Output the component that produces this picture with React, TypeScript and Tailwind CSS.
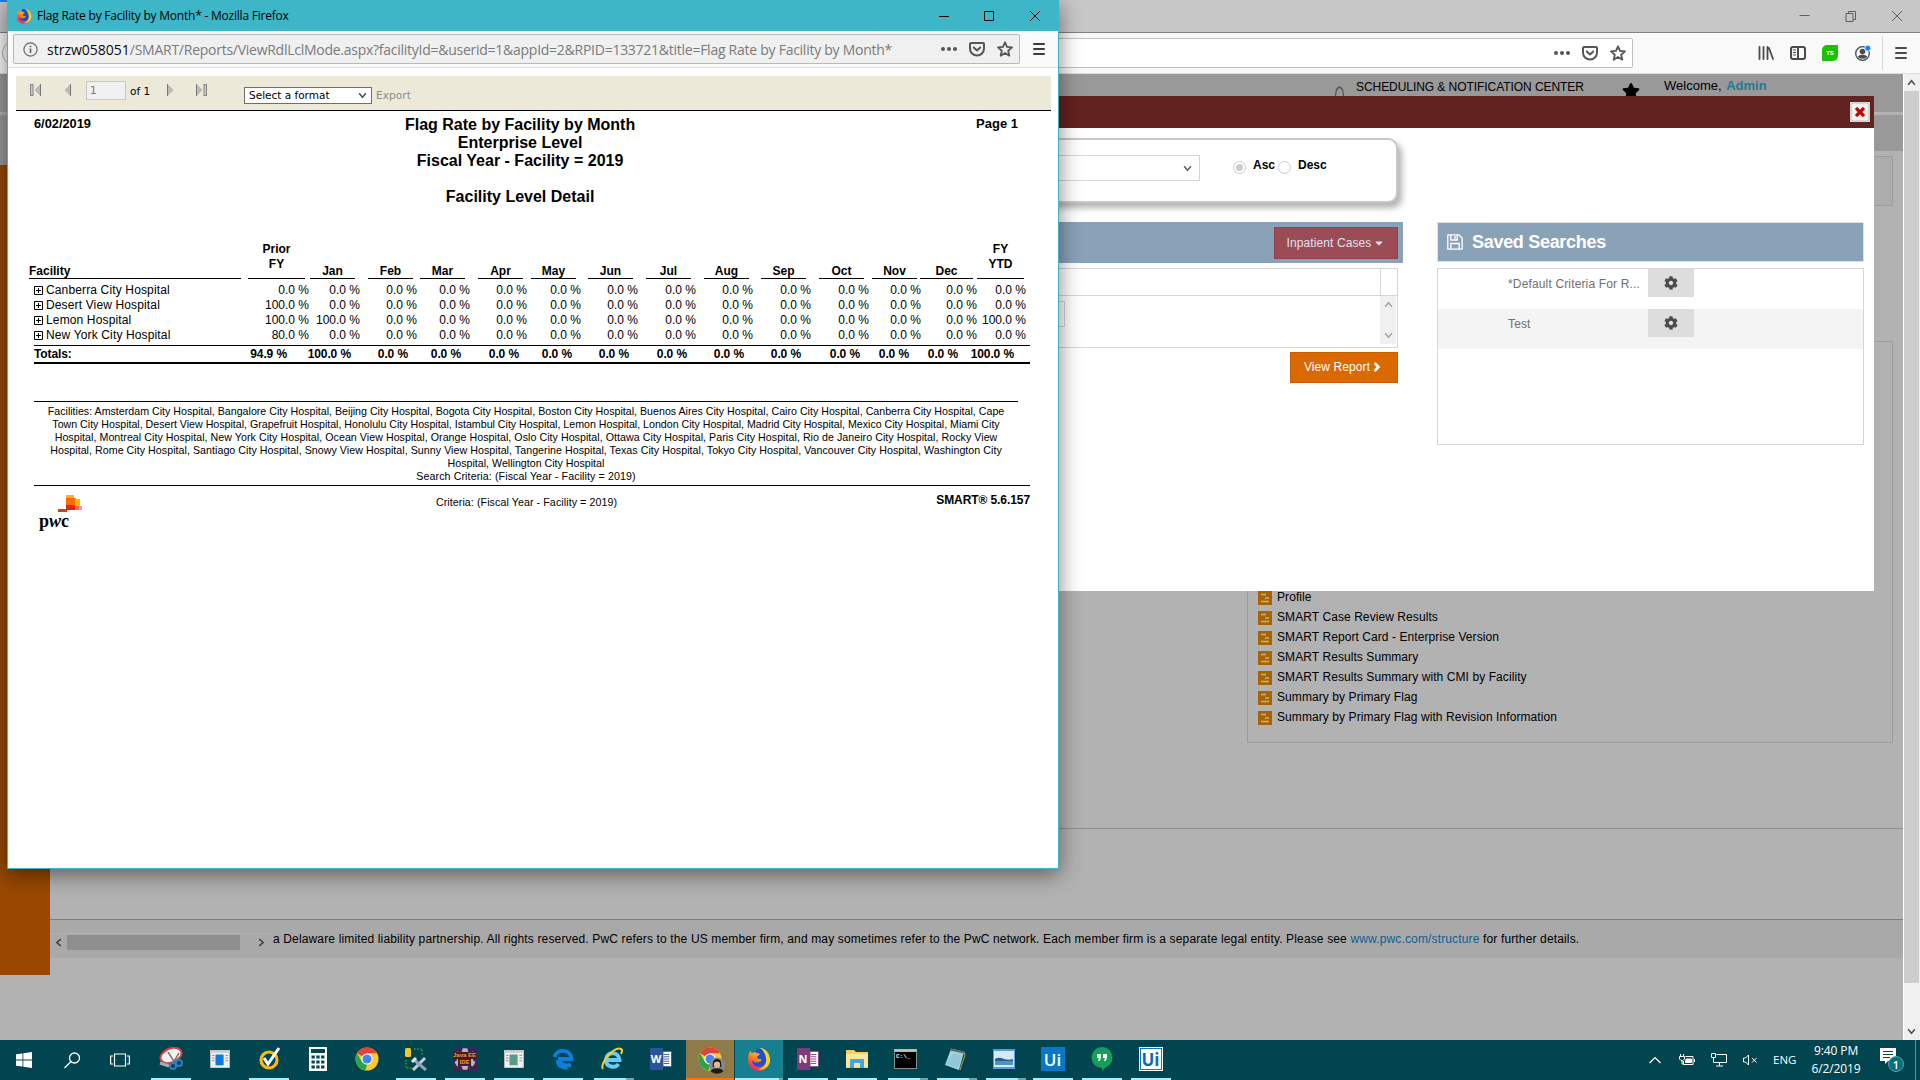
import type { ReactNode } from "react";
import { FaCog, FaCaretDown, FaStar } from "react-icons/fa";

const MONTHS = ["Jan", "Feb", "Mar", "Apr", "May", "Jun", "Jul", "Aug", "Sep", "Oct", "Nov", "Dec"];

// [gap before the column, width of the rule under the heading]
const HEADINGS: [string[], number, number][] = [
  [["Prior", "FY"], 7, 57],
  [["Jan"], 5, 45],
  [["Feb"], 13, 45],
  [["Mar"], 7, 45],
  [["Apr"], 13, 45],
  [["May"], 8, 45],
  [["Jun"], 12, 45],
  [["Jul"], 13, 45],
  [["Aug"], 13, 45],
  [["Sep"], 12, 45],
  [["Oct"], 13, 45],
  [["Nov"], 8, 45],
  [["Dec"], 3, 53],
  [["FY", "YTD"], 4, 47],
];

const ROWS: { name: string; prior: string; jan: string; ytd: string }[] = [
  { name: "Canberra City Hospital", prior: "0.0 %", jan: "0.0 %", ytd: "0.0 %" },
  { name: "Desert View Hospital", prior: "100.0 %", jan: "0.0 %", ytd: "0.0 %" },
  { name: "Lemon Hospital", prior: "100.0 %", jan: "100.0 %", ytd: "100.0 %" },
  { name: "New York City Hospital", prior: "80.0 %", jan: "0.0 %", ytd: "0.0 %" },
];

const REPORTS = [
  "Profile",
  "SMART Case Review Results",
  "SMART Report Card - Enterprise Version",
  "SMART Results Summary",
  "SMART Results Summary with CMI by Facility",
  "Summary by Primary Flag",
  "Summary by Primary Flag with Revision Information",
];

function Dots() {
  return (
    <svg width="16" height="16" viewBox="0 0 16 16" fill="#55555a">
      <circle cx="2" cy="8" r="2" />
      <circle cx="8" cy="8" r="2" />
      <circle cx="14" cy="8" r="2" />
    </svg>
  );
}

function Pocket() {
  return (
    <svg width="16" height="16" viewBox="0 0 16 16" fill="none" stroke="#55555a" strokeWidth="2" strokeLinecap="round" strokeLinejoin="round">
      <path d="M2 2h12a1 1 0 0 1 1 1v4.500a7 7 0 0 1-14 0V3a1 1 0 0 1 1-1z" />
      <path d="M4.800 6.500 8 9.500l3.200-3" />
    </svg>
  );
}

function StarOutline() {
  return (
    <svg width="16" height="16" viewBox="0 0 16 16" fill="none" stroke="#55555a" strokeWidth="1.800" strokeLinejoin="round">
      <path d="M8 1.300l2 4.600 5 .5-3.800 3.300 1.100 5L8 12.100l-4.300 2.600 1.100-5L1 6.400l5-.5z" />
    </svg>
  );
}

function Burger({ color }: { color: string }) {
  return (
    <svg width="12" height="14" viewBox="0 0 12 14" stroke={color} strokeWidth="2" strokeLinecap="round">
      <path d="M1 2h10M1 7h10M1 12h10" />
    </svg>
  );
}

function Chevron({ dir, color, size = 8 }: { dir: "up" | "down" | "left" | "right"; color: string; size?: number }) {
  const paths = { up: "M1 6l3-3.500 3 3.500", down: "M1 2l3 3.500 3-3.500", left: "M6 1L2.500 4 6 7", right: "M2 1l3.500 3L2 7" };
  return (
    <svg width={size} height={size} viewBox="0 0 8 8" fill="none" stroke={color} strokeWidth="1.400">
      <path d={paths[dir]} />
    </svg>
  );
}

function Floppy() {
  return (
    <svg width="16" height="16" viewBox="0 0 16 16" fill="none" stroke="#fff" strokeWidth="1.300" strokeLinejoin="round">
      <path d="M.8.8h11l3.400 3.400v11H.8z" />
      <path d="M3.800 15V9.500h8.400V15M3.800 1v5h6.500V1" />
      <path d="M8 2.200v2.600" strokeWidth="1.600" />
    </svg>
  );
}

function FirefoxIcon({ size }: { size: number }) {
  return (
    <svg width={size} height={size} viewBox="0 0 24 24">
      <defs>
        <linearGradient id="fx" x1="0.800" y1="0" x2="0.200" y2="1">
          <stop offset="0" stopColor="#ffe226" />
          <stop offset="0.450" stopColor="#ff9a1c" />
          <stop offset="0.750" stopColor="#ff4b33" />
          <stop offset="1" stopColor="#e31587" />
        </linearGradient>
      </defs>
      <path d="M3 4l2 2 4-1 5-4c4 1 9 5 9 12a11 11 0 0 1-22 0C1 9 2 6 3 4z" fill="url(#fx)" />
      <path d="M9 2c5-2 11 2 11 10 0 4-3 8-8 8-4 0-7-3-7-7 2 3 5 3 7 2 2 0 3-2 2-3-2 0-4 0-4-2 0-1 3-2 3-3-1-1-3-1-4-1z" fill="#1d51c9" />
      <path d="M14 1c6 3 9 8 9 13-2 8-9 9-12 9 6-2 9-6 8-12 0-4-3-7-5-10z" fill="#ffcf25" />
    </svg>
  );
}

function ChromeIcon() {
  return (
    <svg width="24" height="24" viewBox="0 0 24 24">
      <circle cx="12" cy="12" r="11.500" fill="#fcc934" />
      <path d="M12 12L2 6.300A11.500 11.500 0 0 1 22 6.300H12z" fill="#e0433a" />
      <path d="M2 6.300l5 8.600L12 17.500l-1.600 5.900A11.500 11.500 0 0 1 2 6.300z" fill="#2ba24c" />
      <circle cx="12" cy="12" r="5.600" fill="#fff" />
      <circle cx="12" cy="12" r="4.500" fill="#4285f4" />
    </svg>
  );
}

/* ---------- Browser window behind the report ---------- */

function BackToolbar() {
  return (
    <div className="flex h-[41px] items-center border-b border-[#dedede] bg-[#f9f9fa]">
      <div className="ml-[2px] h-[26px] w-[26px] shrink-0 rounded-full border border-[#b1b1b3]" />
      <div className="ml-[22px] flex h-[30px] w-[1583px] items-center justify-end gap-3 rounded-[2px] border border-[#c0c0c0] bg-white pr-[6px]">
        <Dots />
        <Pocket />
        <StarOutline />
      </div>
      <div className="ml-auto flex h-full items-center">
        <svg width="16" height="16" viewBox="0 0 16 16" stroke="#4a4a4f" strokeWidth="1.800" strokeLinecap="round">
          <path d="M1.500 2v12M5.500 2v12M9.500 2v12M11 3l4 11" />
        </svg>
        <svg className="ml-4" width="16" height="16" viewBox="0 0 16 16" fill="none" stroke="#4a4a4f" strokeWidth="2">
          <rect x="1" y="2" width="14" height="12" rx="2" />
          <path d="M8 2v12" />
          <path d="M3 5h3M3 7.500h3M3 10h3" strokeWidth="1.200" />
        </svg>
        <div className="ml-4 flex h-4 w-4 items-center justify-center rounded-tl-[5px] rounded-br-[5px] bg-[#1fc003] font-['Liberation_Sans'] text-[6px] font-bold text-white">TS</div>
        <svg className="ml-[17px]" width="16" height="17" viewBox="0 0 16 17">
          <circle cx="7.500" cy="8.500" r="6.800" fill="none" stroke="#4a4a4f" strokeWidth="1.300" />
          <circle cx="7.500" cy="6.500" r="2.800" fill="#4a4a4f" />
          <path d="M2.800 11.500c2-2.200 7.400-2.200 9.400 0-1.800 3-7.600 3-9.400 0z" fill="#4a4a4f" />
          <circle cx="12.800" cy="3.200" r="3" fill="#0a84ff" stroke="#f9f9fa" strokeWidth="0.800" />
        </svg>
        <div className="ml-[11px] h-[34px] w-px bg-[#d8d8d9]" />
        <div className="mr-[13px] ml-[12px]">
          <Burger color="#4a4a4f" />
        </div>
      </div>
    </div>
  );
}

function BackWindow() {
  return (
    <div className="flex h-[1040px] flex-col font-['Liberation_Sans',sans-serif] text-[12px] text-black">
      <div className="flex h-[33px] shrink-0 justify-between border-b border-[#828282] bg-[#c7c7c7]">
        <div className="h-[2px] w-4 bg-[#0a84ff]" />
        <svg className="mt-[10px] mr-[17px]" width="104" height="12" viewBox="0 0 104 12" fill="none" stroke="#5e5e5e">
          <path d="M0.500 5.500h10" />
          <path d="M47 3.500h7v8h-7zM49.500 3v-1.500h7v8H54" />
          <path d="M93 1l10 10M103 1L93 11" />
        </svg>
      </div>
      <BackToolbar />
      <div className="flex min-h-0 grow">
        <div className="flex w-[1903px] flex-col bg-[#b2b2b2]">
          <div className="flex h-[38px] shrink-0 bg-[#999999] pl-[1333px]">
            <svg className="mt-[11px]" width="13" height="16" viewBox="0 0 13 16" fill="none" stroke="#555" strokeWidth="1.300">
              <path d="M1.500 14c1-2 1-3 1.500-7 .5-3 2-4.500 3.500-4.500S9.500 4 10 7c.5 4 .5 5 1.500 7M6.500 1v1.500" />
            </svg>
            <span className="mt-[4px] ml-[10px] w-[256px] tracking-[-0.06px] whitespace-nowrap">SCHEDULING &amp; NOTIFICATION CENTER</span>
            <FaStar className="mt-[8px] ml-[10px]" size={18} />
            <span className="mt-[2px] ml-[24px] text-[13px] whitespace-nowrap">
              Welcome, <b className="ml-px text-[#1e7b95]">Admin</b>
            </span>
          </div>
          <div className="mt-[3px] h-[36px] shrink-0 bg-[#999999]" />
          <div className="flex h-[824px] shrink-0">
            <div className="-mt-[1px] flex w-[50px] shrink-0 flex-col">
              <div className="h-[15px] bg-[#999999]" />
              <div className="grow bg-[#994800]" />
            </div>
            <div className="flex grow flex-col">
              <div className="mt-[5px] mr-[10px] h-[50px] shrink-0 border border-[#9c9c9c] bg-[#adadad]" />
              <div className="mt-[135px] mr-[10px] ml-[1197px] flex h-[402px] shrink-0 flex-col justify-end border border-[#9c9c9c] pb-[15px] pl-[10px]">
                {REPORTS.map((name) => (
                  <div key={name} className="flex h-5 items-center">
                    <svg width="14" height="14" viewBox="0 0 14 14" className="mt-px">
                      <rect width="14" height="14" fill="#a86400" />
                      <path d="M3 3.500h5M7 7h4M3 10.500h8" stroke="#c4b393" strokeWidth="1.400" />
                    </svg>
                    <span className="ml-[5px] tracking-[0.08px] whitespace-nowrap">{name}</span>
                  </div>
                ))}
              </div>
              <div className="mt-[85px] h-px shrink-0 bg-[#8f8f8f]" />
              <div className="mt-[90px] flex h-[39px] shrink-0 border-t border-[#7b7b7b] bg-[#a9a9a9]">
                <div className="mt-[13px] flex h-[17px] w-[220px] items-center border-t border-[#b2b2b2]">
                  <div className="flex w-[17px] justify-center">
                    <Chevron dir="left" color="#3f3f3f" size={9} />
                  </div>
                  <div className="h-[15px] w-[173px] bg-[#8f8f8f]" />
                  <div className="ml-auto flex w-[17px] justify-center">
                    <Chevron dir="right" color="#3f3f3f" size={9} />
                  </div>
                </div>
                <span className="mt-[10px] ml-[3px] tracking-[0.145px] whitespace-nowrap">
                  a Delaware limited liability partnership. All rights reserved. PwC refers to the US member firm, and may sometimes refer to the PwC network. Each member firm is a separate legal entity. Please see{" "}
                  <span className="text-[#0d5f93]">www.pwc.com/structure</span> for further details.
                </span>
              </div>
            </div>
          </div>
        </div>
        <div className="flex w-[17px] flex-col items-start border-l border-white bg-[#f0f0f0]">
          <div className="flex h-[17px] w-[15px] items-center justify-center">
            <Chevron dir="up" color="#505050" size={9} />
          </div>
          <div className="h-[892px] w-[15px] bg-[#cdcdcd]" />
          <div className="mt-auto flex h-[17px] w-[15px] items-center justify-center">
            <Chevron dir="down" color="#505050" size={9} />
          </div>
        </div>
      </div>
    </div>
  );
}

function SavedRow({ label, striped }: { label: string; striped?: boolean }) {
  return (
    <div className={`flex h-10 pl-[70px] ${striped ? "bg-[#f4f4f4]" : ""}`}>
      <span className="mt-[6px] w-[140px] tracking-[0.15px] text-[#707070]">{label}</span>
      <span className="flex h-[28px] w-[46px] items-center justify-center bg-[#dddddd]">
        <FaCog size={14} color="#4c4c4c" />
      </span>
    </div>
  );
}

function CriteriaDialog() {
  return (
    <div className="absolute top-[96px] left-[200px] flex h-[495px] w-[1674px] flex-col bg-white font-['Liberation_Sans',sans-serif] text-[12px] text-black">
      <div className="flex h-8 shrink-0 justify-end bg-[#622220] pt-[6px] pr-[4px]">
        <div className="flex h-5 w-5 items-center justify-center border-2 border-[#d4d4d4] bg-[#f0f0f0]">
          <svg width="10" height="10" viewBox="0 0 10 10" stroke="#cc0000" strokeWidth="3.200">
            <path d="M1 1l8 8M9 1L1 9" />
          </svg>
        </div>
      </div>
      <div className="flex h-[76px] w-[1198px] flex-col pt-[10px]">
        <div className="flex h-[65px] items-start justify-end rounded-[10px] border-2 border-[#c8c8c8] bg-white pt-[15px] shadow-[4px_5px_6px_rgba(0,0,0,0.3)]">
          <div className="flex h-[26px] w-[400px] items-center justify-end border border-[#d6d6d6] pr-[7px]">
            <Chevron dir="down" color="#606060" size={9} />
          </div>
          <div className="mt-px ml-[33px] flex w-[163px] font-bold">
            <span className="mt-[5px] flex h-[13px] w-[13px] items-center justify-center rounded-full border border-[#cccccc]">
              <span className="h-[7px] w-[7px] rounded-full bg-[#cccccc]" />
            </span>
            <span className="ml-[7px] w-[25px]">Asc</span>
            <span className="mt-[5px] h-[13px] w-[13px] rounded-full border border-[#cccccc]" />
            <span className="ml-[7px]">Desc</span>
          </div>
        </div>
      </div>
      <div className="mt-[18px] flex">
        <div className="flex w-[1203px] flex-col">
          <div className="flex h-[41px] justify-end bg-[#8aa2b8] pt-[5px] pr-[5px]">
            <div className="flex h-8 w-[124px] items-center justify-center gap-[2px] border border-[#92424c] bg-[#9c4c56] tracking-[0.1px] text-[#dfe3ea]">
              Inpatient Cases <FaCaretDown size={12} />
            </div>
          </div>
          <div className="mt-[5px] mr-[5px] flex h-[80px] flex-col border border-[#d6d6d6]">
            <div className="h-[27px] shrink-0 border-b border-[#d6d6d6] pr-4">
              <div className="h-full border-r border-[#d6d6d6]" />
            </div>
            <div className="flex grow justify-end">
              <div className="mt-[5px] h-[26px] w-[300px] border border-[#d6d6d6]" />
              <div className="mr-px ml-[315px] flex h-[48px] w-4 flex-col items-center justify-between bg-[#f0f0f0] py-[4px]">
                <Chevron dir="up" color="#a8a8a8" size={9} />
                <Chevron dir="down" color="#a8a8a8" size={9} />
              </div>
            </div>
          </div>
          <div className="mt-[4px] mr-[5px] ml-auto flex h-[31px] w-[108px] items-center justify-center gap-[3px] border border-[#c86000] bg-[#dc6900] pr-[3px] pb-px tracking-[0.1px] text-white">
            View Report
            <svg width="8" height="10" viewBox="0 0 8 10" fill="none" stroke="#fff" strokeWidth="2.600">
              <path d="M1.500 1l4 4-4 4" />
            </svg>
          </div>
        </div>
        <div className="ml-[34px] w-[427px]">
          <div className="flex h-10 items-center border border-[#dfe3e8] bg-[#8aa2b8] pl-[9px] text-white">
            <Floppy />
            <span className="ml-[9px] text-[18px] font-bold tracking-[-0.3px]">Saved Searches</span>
          </div>
          <div className="mt-[6px] h-[177px] border border-[#d6d6d6]">
            <SavedRow label="*Default Criteria For R..." />
            <SavedRow label="Test" striped />
          </div>
        </div>
      </div>
    </div>
  );
}

/* ---------- Report window ---------- */

function PageArrow({ flip, bar }: { flip?: boolean; bar?: boolean }) {
  return (
    <svg width="12" height="12" viewBox="0 0 12 12" className={flip ? "-scale-x-100" : ""}>
      {bar && <rect x="0.500" y="0.500" width="2.500" height="11" fill="#c8c8c8" stroke="#858585" />}
      <path d="M10.500 0.500v11L5 6z" fill="#bcbcbc" stroke="#a2a2a2" strokeWidth="0.600" />
      <path d="M10.500 0v12" stroke="#777" />
    </svg>
  );
}

function Expander() {
  return (
    <svg width="9" height="9" viewBox="0 0 9 9" fill="none" stroke="#000">
      <path d="M.5 .5h8v8h-8zM2 4.500h5M4.500 2v5" />
    </svg>
  );
}

function ReportTable() {
  return (
    <div className="mt-[36px] text-[12px] leading-[15px]">
      <div className="flex items-end pl-[13px] font-bold">
        <div className="h-[15px] w-[212px] border-b border-black">Facility</div>
        {HEADINGS.map(([lines, gap, width]) => (
          <div key={lines.join(" ")} className="border-b border-black text-center" style={{ marginLeft: gap, width, height: lines.length > 1 ? 37 : 15 }}>
            {lines.map((line) => (
              <div key={line}>{line}</div>
            ))}
          </div>
        ))}
      </div>
      <div className="mt-[4px]">
        {ROWS.map((row) => (
          <div key={row.name} className="grid h-[15px] grid-cols-[206px_69px_51px_57px_53px_57px_54px_57px_58px_57px_58px_58px_52px_56px_49px] pl-[18px] text-right whitespace-nowrap">
            <div className="flex items-center gap-[3px] tracking-[0.14px]">
              <Expander />
              {row.name}
            </div>
            <div>{row.prior}</div>
            {MONTHS.map((m) => (
              <div key={m}>{m === "Jan" ? row.jan : "0.0 %"}</div>
            ))}
            <div>{row.ytd}</div>
          </div>
        ))}
      </div>
      <div className="mt-[2px] mr-[20px] ml-[18px] grid h-[19px] grid-cols-[200px_53px_64px_57px_53px_58px_53px_57px_58px_57px_57px_59px_49px_49px_56px] border-t border-b-2 border-black pt-px text-right font-bold tracking-[-0.1px] whitespace-nowrap">
        <div className="text-left">Totals:</div>
        <div>94.9 %</div>
        {MONTHS.map((m) => (
          <div key={m}>{m === "Jan" ? "100.0 %" : "0.0 %"}</div>
        ))}
        <div>100.0 %</div>
      </div>
    </div>
  );
}

function ReportWindow() {
  return (
    <div className="absolute top-0 left-[7px] flex h-[869px] w-[1052px] flex-col border-x border-b border-[#3db6c8] bg-white shadow-[0_5px_20px_1px_rgba(0,0,0,0.45)]">
      <div className="flex h-[31px] shrink-0 items-center bg-[#3db6c8] pl-[8px] font-['Open_Sans',sans-serif] text-[12px] text-black">
        <FirefoxIcon size={16} />
        <span className="ml-[5px] tracking-[-0.22px] whitespace-nowrap">Flag Rate by Facility by Month* - Mozilla Firefox</span>
        <svg className="mr-[16px] ml-auto" width="104" height="12" viewBox="0 0 104 12" fill="none" stroke="#000">
          <path d="M1 6.500h10M46.500 1.500h9v9h-9zM92 1l10 10M102 1L92 11" />
        </svg>
      </div>
      <div className="flex h-[37px] shrink-0 items-center border-b border-[#e0e0e1] bg-[#f9f9fa] pl-[5px]">
        <div className="flex h-[30px] w-[1007px] items-center rounded-[2px] border border-[#b8b8b8] bg-[#f0f0f0] pr-[6px] pl-[9px]">
          <svg width="15" height="15" viewBox="0 0 15 15" fill="none" stroke="#666" strokeWidth="1.200">
            <circle cx="7.500" cy="7.500" r="6.600" />
            <path d="M7.500 6.500v4.500M7.500 3.800v1.500" strokeWidth="1.700" />
          </svg>
          <span className="ml-[9px] font-['Open_Sans',sans-serif] text-[14px] tracking-[-0.26px] whitespace-nowrap text-[#7b7b7b]">
            <span className="tracking-normal text-[#0c0c0d]">strzw058051</span>/SMART/Reports/ViewRdlLclMode.aspx?facilityId=&amp;userid=1&amp;appId=2&amp;RPID=133721&amp;title=Flag Rate by Facility by Month*
          </span>
          <div className="ml-auto flex gap-3">
            <Dots />
            <Pocket />
            <StarOutline />
          </div>
        </div>
        <div className="ml-[13px]">
          <Burger color="#3c3c40" />
        </div>
      </div>

      <div className="mt-[8px] mr-[7px] ml-[8px] flex h-[35px] shrink-0 items-start border-b border-black bg-[#ece9d8] pl-[14px] font-['DejaVu_Sans',sans-serif] text-[10.5px] text-black">
        <div className="mt-[8px]"><PageArrow bar /></div>
        <div className="mt-[8px] ml-[18px]"><PageArrow /></div>
        <div className="mt-[5px] ml-[14px] flex h-[19px] w-[40px] items-center border border-[#c4c8cc] bg-[#f0f0f0] pl-[3px] text-[#777]">1</div>
        <span className="mt-[8px] ml-[4px] w-[22px] whitespace-nowrap">of 1</span>
        <div className="mt-[8px] ml-[14px]"><PageArrow flip /></div>
        <div className="mt-[8px] ml-[17px]"><PageArrow flip bar /></div>
        <div className="mt-[11px] ml-[37px] flex h-[17px] w-[128px] items-center justify-between border border-[#6e6e6e] bg-white pr-[4px] pl-[4px] whitespace-nowrap">
          Select a format
          <Chevron dir="down" color="#505050" size={9} />
        </div>
        <span className="mt-[12px] ml-[4px] tracking-[0.1px] text-[#8d8d86]">Export</span>
      </div>

      <div className="mx-[8px] font-['Liberation_Sans',sans-serif] text-black">
        <div className="flex justify-between pt-[5px] pr-[32px] pl-[18px] font-bold">
          <div className="-mt-[2px] w-[112px] text-[12.800px]">6/02/2019</div>
          <div className="w-[760px] text-center text-[16px] leading-[18px]">
            <div>Flag Rate by Facility by Month</div>
            <div>Enterprise Level</div>
            <div>Fiscal Year - Facility = 2019</div>
            <div className="mt-[18px]">Facility Level Detail</div>
          </div>
          <div className="-mt-[2px] w-[124px] text-right text-[13px]">Page 1</div>
        </div>
        <ReportTable />
        <div className="mt-[37px] ml-[18px] w-[984px] border-t border-black pt-[3px] text-center text-[10.670px] leading-[13px] whitespace-nowrap">
          <div>Facilities: Amsterdam City Hospital, Bangalore City Hospital, Beijing City Hospital, Bogota City Hospital, Boston City Hospital, Buenos Aires City Hospital, Cairo City Hospital, Canberra City Hospital, Cape</div>
          <div className="tracking-[-0.015px]">Town City Hospital, Desert View Hospital, Grapefruit Hospital, Honolulu City Hospital, Istambul City Hospital, Lemon Hospital, London City Hospital, Madrid City Hospital, Mexico City Hospital, Miami City</div>
          <div className="tracking-[0.04px]">Hospital, Montreal City Hospital, New York City Hospital, Ocean View Hospital, Orange Hospital, Oslo City Hospital, Ottawa City Hospital, Paris City Hospital, Rio de Janeiro City Hospital, Rocky View</div>
          <div className="tracking-[0.04px]">Hospital, Rome City Hospital, Santiago City Hospital, Snowy View Hospital, Sunny View Hospital, Tangerine Hospital, Texas City Hospital, Tokyo City Hospital, Vancouver City Hospital, Washington City</div>
          <div>Hospital, Wellington City Hospital</div>
          <div className="tracking-[0.1px]">Search Criteria: (Fiscal Year - Facility = 2019)</div>
        </div>
        <div className="mt-[2px] mr-[20px] ml-[18px] flex justify-between border-t border-black">
          <div className="flex w-[100px] flex-col pt-[9px] pl-[4px]">
            <svg className="ml-[20px]" width="24" height="17" viewBox="0 0 24 17">
              <rect x="0" y="14" width="9" height="3" fill="#d93a1f" />
              <rect x="8" y="0" width="8" height="4" fill="#ffab2e" />
              <rect x="8" y="3" width="10" height="12" fill="#ff6a00" />
              <rect x="17" y="4" width="5" height="8" fill="#ffb600" />
              <rect x="8" y="10" width="9" height="5" fill="#dc2a08" />
              <rect x="17" y="11" width="5" height="4" fill="#ef6b4a" />
              <rect x="21" y="11" width="3" height="4" fill="#ee8fb4" />
            </svg>
            <div className="ml-px font-['Liberation_Serif',serif] text-[18px] leading-[18px] font-bold">
              p<i>w</i>c
            </div>
          </div>
          <div className="pt-[10px] text-[10.670px] leading-[13px] tracking-[0.08px]">Criteria: (Fiscal Year - Facility = 2019)</div>
          <div className="w-[111px] pt-[5px] text-right text-[12px] font-bold tracking-[-0.08px] whitespace-nowrap">SMART® 5.6.157</div>
        </div>
      </div>
    </div>
  );
}

/* ---------- Taskbar ---------- */

type Slot = { id: string; icon: ReactNode; state?: "open" | "stacked" | "alert" | "active" };

const WindowApp = ({ accent }: { accent: string }) => (
  <svg width="20" height="18" viewBox="0 0 22 20">
    <rect width="22" height="20" fill="#f0f0f0" stroke="#9a9a9a" />
    <rect width="22" height="3" fill="#c9c9c9" />
    <rect x="6" y="5" width="9" height="12" fill={accent} />
    <path d="M2 6h3M2 9h3M2 12h3M17 6h3M17 9h3M17 12h3" stroke="#8a8a8a" />
  </svg>
);

const OfficeIcon = ({ letter, color }: { letter: string; color: string }) => (
  <div className="flex h-6 w-[22px] items-center">
    <div className="flex h-[22px] w-[13px] items-center justify-center font-['Open_Sans',sans-serif] text-[11px] font-bold text-white" style={{ background: color }}>
      {letter}
    </div>
    <svg width="9" height="18" viewBox="0 0 10 18">
      <path d="M0 .5h9.500v17H0z" fill="#fff" stroke={color} />
      <path d="M1 4h6M1 6.500h6M1 9h6M1 11.500h6M1 14h6" stroke={color} />
    </svg>
  </div>
);

const SLOTS: Slot[] = [
  {
    id: "snip",
    state: "open",
    icon: (
      <svg width="24" height="24" viewBox="0 0 24 24">
        <ellipse cx="12" cy="8.500" rx="11" ry="7" transform="rotate(-22 12 8.500)" fill="#f4f4f4" stroke="#d33f3a" strokeWidth="2" />
        <path d="M1 16l9 3" stroke="#aaaabb" strokeWidth="3" />
        <path d="M9 5l7 11M20 6l-6 10" stroke="#777" strokeWidth="1.500" />
        <circle cx="14" cy="19" r="3" fill="none" stroke="#2b7fc4" strokeWidth="2" />
        <circle cx="20" cy="16" r="3" fill="none" stroke="#2b7fc4" strokeWidth="2" />
      </svg>
    ),
  },
  { id: "sysinfo", icon: <WindowApp accent="#0a7bd8" /> },
  {
    id: "norton",
    state: "open",
    icon: (
      <svg width="24" height="24" viewBox="0 0 24 24" fill="none">
        <circle cx="12" cy="13" r="8" stroke="#fbb912" strokeWidth="3.200" />
        <path d="M7 11l4 6L22 1" stroke="#fff" strokeWidth="3" />
      </svg>
    ),
  },
  {
    id: "calc",
    icon: (
      <svg width="18" height="24" viewBox="0 0 18 24">
        <rect width="18" height="24" fill="#fff" />
        <rect x="2" y="2" width="14" height="4" fill="#00454f" />
        <path d="M2.500 10h13M2.500 15h13M2.500 20h13" stroke="#00454f" strokeWidth="3" strokeDasharray="3.300 1.500" />
      </svg>
    ),
  },
  { id: "chrome", icon: <ChromeIcon /> },
  {
    id: "dbtools",
    state: "open",
    icon: (
      <svg width="24" height="24" viewBox="0 0 24 24" fill="none">
        <rect x="1" y="1" width="6" height="9" rx="1.500" fill="#f4c430" />
        <path d="M10 2h8v6M2 13v8h6" stroke="#3f9a3f" strokeDasharray="1.500 1.500" strokeWidth="1.500" />
        <path d="M9 23L21 11" stroke="#c9ced4" strokeWidth="3" />
        <path d="M9 12l13 11" stroke="#8fa5bb" strokeWidth="3" />
        <path d="M8 15l4-4" stroke="#dfe4ea" strokeWidth="3" />
      </svg>
    ),
  },
  {
    id: "eclipse",
    state: "open",
    icon: (
      <div className="relative flex h-6 w-6 flex-col items-center justify-center bg-[#3c2554] font-['Liberation_Sans',sans-serif] text-[6px] leading-[7px] font-bold text-[#ff9434]">
        <FaCog className="absolute top-px left-px" size={22} color="#b9b4bd" />
        <span className="relative bg-[#3c1f22] whitespace-nowrap">Java EE</span>
        <span className="relative bg-[#3c1f22] px-px">IDE</span>
      </div>
    ),
  },
  { id: "viewer", state: "open", icon: <WindowApp accent="#5a9a86" /> },
  {
    id: "edge",
    state: "open",
    icon: (
      <svg width="22" height="22" viewBox="0 0 22 22" fill="none">
        <path d="M2.500 9C4.500 1 18.500 0 19.500 11H8c0 6 6 8 11 5.500" stroke="#0c7fde" strokeWidth="4" />
        <path d="M5.500 12c-1 6 5 9 10 8" stroke="#0c7fde" strokeWidth="2.500" />
      </svg>
    ),
  },
  {
    id: "ie",
    state: "stacked",
    icon: (
      <svg width="24" height="24" viewBox="0 0 24 24" fill="none">
        <path d="M18.500 17c-3 4.500-12.500 3.500-12.500-4C6 4 19 4 19.500 13H8" stroke="#63cdf5" strokeWidth="4" />
        <path d="M3 22C-1 17 14-1 21 2c2 1 1 3 0 5" stroke="#f5cf32" strokeWidth="2" />
      </svg>
    ),
  },
  { id: "word", icon: <OfficeIcon letter="W" color="#2a5699" /> },
  {
    id: "chrome-profile",
    state: "alert",
    icon: (
      <div className="relative">
        <ChromeIcon />
        <svg className="absolute -right-[3px] -bottom-[3px]" width="16" height="17" viewBox="0 0 15 15">
          <circle cx="7.500" cy="7.500" r="7.500" fill="#8a8a80" />
          <path d="M3.500 6c0-6 8-6 8 0v3h-8z" fill="#151515" />
          <circle cx="7.500" cy="6.800" r="3" fill="#e0b79c" />
          <path d="M1.500 13c1-4 11-4 12 0-3 3-9 3-12 0z" fill="#1c1c1c" />
        </svg>
      </div>
    ),
  },
  { id: "firefox", state: "active", icon: <FirefoxIcon size={24} /> },
  { id: "onenote", state: "open", icon: <OfficeIcon letter="N" color="#80397b" /> },
  {
    id: "explorer",
    state: "open",
    icon: (
      <svg width="22" height="20" viewBox="0 0 22 20">
        <path d="M0 1h8l2 2h12v16H0z" fill="#f5cf64" />
        <path d="M0 5h22v13H0z" fill="#ffe596" />
        <path d="M4 10h14v9h-4v-5H8v5H4z" fill="#41a5ee" />
      </svg>
    ),
  },
  {
    id: "cmd",
    state: "stacked",
    icon: (
      <div className="h-[20px] w-[23px] border border-t-[3px] border-[#8a8a8a] border-t-[#bbbbbb] bg-black pl-px font-['Liberation_Mono',monospace] text-[6px] leading-[9px] font-bold text-white">C:\_</div>
    ),
  },
  {
    id: "notepad",
    state: "stacked",
    icon: (
      <svg width="24" height="24" viewBox="0 0 24 24">
        <path d="M8 2l13 3-5 18-14-5z" fill="#a9d3dd" />
        <path d="M8 2l13 3 1 3-5 15" fill="none" stroke="#b69a5c" />
        <path d="M7 2.500l14 3" stroke="#5b6a70" strokeWidth="2" />
        <path d="M3 17l7-11 9 2-4 13z" fill="#8fc9d7" />
      </svg>
    ),
  },
  {
    id: "pictures",
    state: "stacked",
    icon: (
      <svg width="22" height="20" viewBox="0 0 22 20">
        <rect width="22" height="20" fill="#5e9ad3" />
        <rect x="1" y="2" width="20" height="16" fill="#d3e9f7" />
        <path d="M2 10c3-2 6-1 9 0s6 1 9 0v4H2z" fill="#2b5f84" />
        <path d="M2 12h18v4H2z" fill="#4a96c9" />
      </svg>
    ),
  },
  { id: "uipath", state: "open", icon: <div className="flex h-6 w-6 items-center justify-center bg-[#0a78c8] font-['Open_Sans',sans-serif] text-[17px] leading-none font-semibold text-white">Ui</div> },
  {
    id: "hangouts",
    state: "open",
    icon: (
      <svg width="22" height="24" viewBox="0 0 22 24">
        <circle cx="11" cy="10.500" r="10.500" fill="#149e5a" />
        <path d="M11 18h6l-6 6z" fill="#149e5a" />
        <path d="M6 7h4v4l-1.500 3H7l1-3H6zM12 7h4v4l-1.500 3H13l1-3h-2z" fill="#fff" />
      </svg>
    ),
  },
  { id: "uipath-studio", state: "open", icon: <div className="flex h-6 w-6 items-center justify-center border-2 border-white bg-white font-['Open_Sans',sans-serif] text-[17px] leading-none font-bold text-[#0a6cb8] outline-1 -outline-offset-2 outline-[#0a78c8]">Ui</div> },
];

function TaskSlot({ slot }: { slot: Slot }) {
  const bg = slot.state === "alert" ? "bg-[#8f7a49]" : slot.state === "active" ? "bg-[#17808f]" : "";
  return (
    <div className="h-10 w-[49px] pr-px">
      <div className={`flex h-full flex-col ${bg}`}>
        <div className="flex grow items-center justify-center pr-px">{slot.icon}</div>
        <div className="flex h-[2px] justify-center">
          {slot.state === "open" && <div className="w-10 bg-[#a6eefa]" />}
          {slot.state === "alert" && <div className="w-full bg-[#ff7300]" />}
          {slot.state === "stacked" && (
            <>
              <div className="ml-[3px] w-8 bg-[#a6eefa]" />
              <div className="w-[8px] bg-[#6fa6ae]" />
            </>
          )}
          {slot.state === "active" && (
            <>
              <div className="grow bg-[#a6eefa]" />
              <div className="w-[4px] bg-[#6fa6ae]" />
            </>
          )}
        </div>
      </div>
    </div>
  );
}

function Taskbar() {
  return (
    <div className="flex h-10 items-center bg-[#00454f] font-['Open_Sans',sans-serif] text-[12px] text-white">
      <div className="flex w-[147px] items-center pl-4">
        <svg width="16" height="16" viewBox="0 0 16 16" fill="#fff">
          <path d="M0 2.300l6.500-.9v6.200H0zM7.300 1.300L16 0v7.600H7.300zM0 8.400h6.500v6.200L0 13.700zM7.300 8.400H16V16l-8.700-1.300z" />
        </svg>
        <svg className="ml-8" width="17" height="17" viewBox="0 0 17 17" fill="none" stroke="#fff" strokeWidth="1.300">
          <circle cx="10.500" cy="6" r="5" />
          <path d="M7 9.500L.5 16" />
        </svg>
        <svg className="ml-[29px]" width="20" height="14" viewBox="0 0 20 14" fill="none" stroke="#fff" strokeWidth="1.200">
          <path d="M4.500 1h11v12h-11zM3 3H.6v8H3M17 3h2.400v8H17" />
        </svg>
      </div>
      {SLOTS.map((slot) => (
        <TaskSlot key={slot.id} slot={slot} />
      ))}
      <div className="ml-auto flex h-full items-center">
        <svg width="12" height="8" viewBox="0 0 12 8" fill="none" stroke="#fff" strokeWidth="1.200">
          <path d="M.5 7L6 1.500 11.500 7" />
        </svg>
        <svg className="ml-[18px]" width="16" height="12" viewBox="0 0 16 12" fill="none" stroke="#fff">
          <path d="M6.500 2.500h7.500v8H4.500V7M15.500 5v3M1.500 0v2M4.500 0v2M.5 2.500h5V5L4 6.500H2L.5 5zM3 6.500V10h1.500" />
          <path d="M7 5h5.500v3.500h-6z" fill="#fff" />
        </svg>
        <svg className="ml-[16px]" width="16" height="14" viewBox="0 0 16 14" fill="none" stroke="#fff">
          <path d="M5.500 1.500h10v8h-13V5M8.500 9.500v3M5 13h7M.5 .5h4v4h-4zM2.500 4.500v3" />
        </svg>
        <svg className="ml-[16px]" width="15" height="12" viewBox="0 0 15 12" fill="none" stroke="#fff">
          <path d="M.5 4h2l3-3v10l-3-3h-2zM9 4l4.500 4.500M13.500 4L9 8.500" />
        </svg>
        <span className="ml-[15px] w-[24px] text-[11.5px]">ENG</span>
        <div className="ml-[9px] w-[60px] text-center leading-[18px] tracking-[-0.1px]">
          <div>9:40 PM</div>
          <div>6/2/2019</div>
        </div>
        <div className="relative ml-[14px] h-[24px] w-[24px]">
          <svg width="16" height="16" viewBox="0 0 16 16">
            <path d="M0 0h16v13H8l-3 3v-3H0z" fill="#fff" />
            <path d="M3 3.500h10M3 6.500h10M3 9.500h7" stroke="#00454f" />
          </svg>
          <div className="absolute right-0 bottom-0 flex h-4 w-4 items-center justify-center rounded-full border border-[#5fa3ac] bg-[#04707e] text-[11px] leading-none font-semibold">1</div>
        </div>
        <div className="mr-[4px] ml-[11px] h-full w-px bg-[#5f8f96]" />
      </div>
    </div>
  );
}

export default function App() {
  return (
    <div className="relative h-[1080px] w-[1920px] overflow-hidden">
      <BackWindow />
      <Taskbar />
      <CriteriaDialog />
      <ReportWindow />
    </div>
  );
}
